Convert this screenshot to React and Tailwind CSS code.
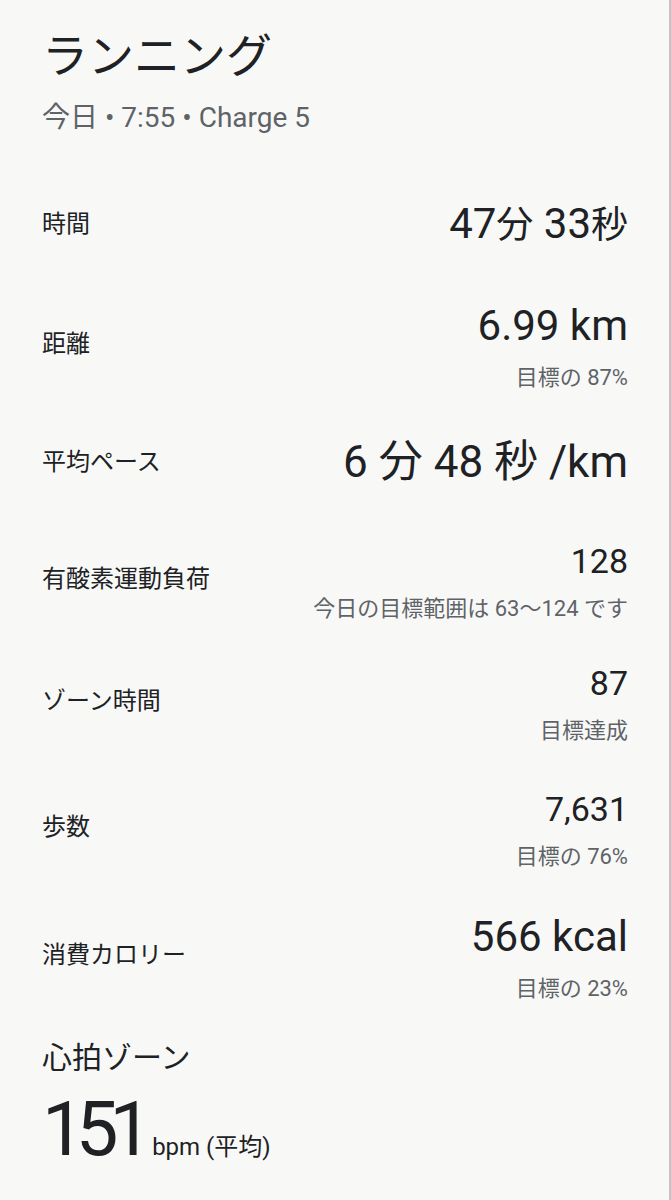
import React from "react";

const FONT = { fontFamily: 'Roboto, "Noto Sans CJK JP", sans-serif' };

const rows = [
  {
    label: "時間",
    h: "h-[120px]",
    value: (
      <span className="text-[42px] leading-none">
        47<span className="text-[37px]">分</span> 33<span className="text-[37px]">秒</span>
      </span>
    ),
  },
  {
    label: "距離",
    h: "h-[120px]",
    value: <span className="text-[42px] leading-none">6.99 km</span>,
    sub: "目標の 87%",
  },
  {
    label: "平均ペース",
    h: "h-[116px]",
    value: <span className="text-[44px] leading-none">6 分 48 秒 /km</span>,
  },
  {
    label: "有酸素運動負荷",
    h: "h-[118px]",
    value: <span className="text-[34px] leading-none">128</span>,
    sub: "今日の目標範囲は 63～124 です",
  },
  {
    label: "ゾーン時間",
    h: "h-[125px]",
    value: <span className="text-[34px] leading-none">87</span>,
    sub: "目標達成",
  },
  {
    label: "歩数",
    h: "h-[127px]",
    value: <span className="text-[34px] leading-none">7,631</span>,
    sub: "目標の 76%",
  },
  {
    label: "消費カロリー",
    h: "h-[130px]",
    value: <span className="text-[42px] leading-none">566 kcal</span>,
    sub: "目標の 23%",
  },
];

function Row({ label, value, sub, h }) {
  return (
    <div className={`flex items-center justify-between ${h}`}>
      <div className="pb-[6px] text-[24px] leading-none text-[#202124]">{label}</div>
      <div
        className={
          sub
            ? "flex flex-col items-end text-[#202124]"
            : "flex flex-col items-end pb-[6px] text-[#202124]"
        }
      >
        {value}
        {sub && (
          <div className="mt-[20px] text-[22px] leading-none text-[#5f6368]">{sub}</div>
        )}
      </div>
    </div>
  );
}

export default function App() {
  return (
    <div
      style={FONT}
      className="min-h-[1200px] w-[671px] bg-[#f8f9f7] border-r-2 border-[#c4c5c4] text-[#202124]"
    >
      <div className="pl-[42px] pr-[41px] pt-[33px]">
        <h1 className="text-[46px] leading-none font-normal">ランニング</h1>
        <p className="mt-[25px] text-[28px] leading-none text-[#5f6368]">
          今日 • 7:55 • Charge 5
        </p>
        <div className="mt-[35px]">
          {rows.map((r) => (
            <Row key={r.label} {...r} />
          ))}
        </div>
        <h2 className="mt-[20px] text-[30px] leading-none font-normal">心拍ゾーン</h2>
        <div className="mt-[18px] flex items-baseline">
          <span className="text-[76px] leading-none tracking-[-9px]">151</span>
          <span className="ml-[9px] text-[24px] leading-none">bpm (平均)</span>
        </div>
      </div>
    </div>
  );
}
